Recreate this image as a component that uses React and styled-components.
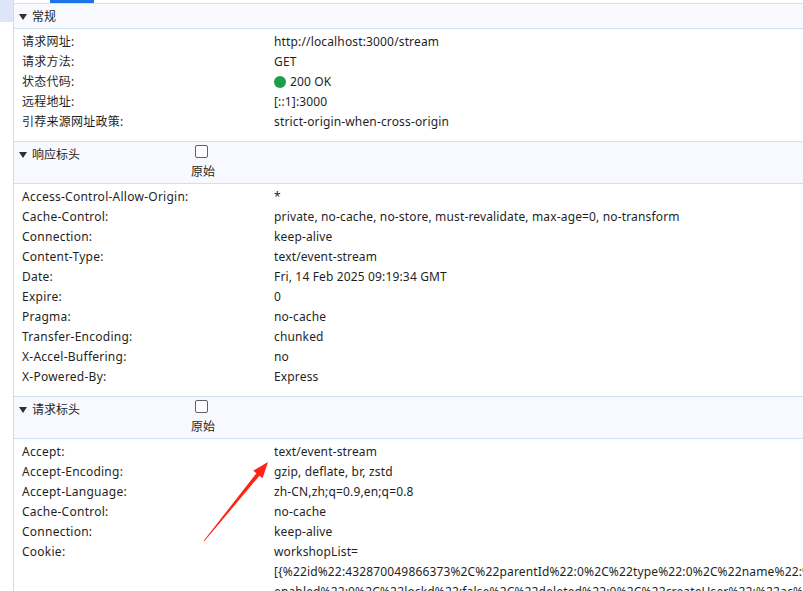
import React from "react";
import styled, { createGlobalStyle } from "styled-components";

const GlobalStyle = createGlobalStyle`
  html, body { margin: 0; padding: 0; background: #ffffff; }
  body {
    font-family: "Noto Sans", "Noto Sans CJK SC", sans-serif;
    font-size: 12px;
    color: #1f1f1f;
  }
`;

const Page = styled.div`
  display: flex;
  width: 803px;
  height: 591px;
  overflow: hidden;
  position: relative;
`;

const Rail = styled.div`
  width: 13px;
  flex: none;
  border-right: 1px solid #d3dbe7;
  display: flex;
  flex-direction: column;
`;

const RailSelected = styled.div`
  height: 22px;
  background: #dce6f8;
`;

const Main = styled.div`
  flex: 1;
  min-width: 0;
  display: flex;
  flex-direction: column;
  overflow: hidden;
`;

const TabStrip = styled.div`
  height: 4px;
  border-bottom: 1px solid #d6e2f3;
  display: flex;
  align-items: flex-start;
`;

const TabIndicator = styled.div`
  margin-left: 36px;
  width: 44px;
  height: 3px;
  background: #1a73e8;
`;

const Header = styled.div`
  display: flex;
  align-items: flex-start;
  padding: 3px 0 3px 4px;
  background: #f7f9fe;
  border-top: ${(p) => (p.$first ? "none" : "1px solid #cfdff6")};
  border-bottom: 1px solid #cfdff6;
`;

const TitleArea = styled.div`
  width: 173px;
  flex: none;
  display: flex;
  align-items: center;
  height: 18px;
  padding-top: 1px;
  box-sizing: border-box;
`;

const Triangle = styled.span`
  width: 0;
  height: 0;
  border-left: 4px solid transparent;
  border-right: 4px solid transparent;
  border-top: 6px solid #303030;
  margin: 0 5px 0 1px;
`;

const Title = styled.span`
  line-height: 17px;
  font-size: 12px;
  color: #1f1f1f;
`;

const RawToggle = styled.label`
  display: flex;
  flex-direction: column;
  align-items: center;
  width: 24px;
`;

const Check = styled.span`
  display: block;
  width: 11px;
  height: 11px;
  border: 1px solid #5f6368;
  border-radius: 2px;
  background: #fff;
  margin-left: -3px;
`;

const RawText = styled.span`
  margin-top: 5px;
  line-height: 17px;
`;

const Rows = styled.div`
  padding: 3px 0 9px;
`;

const Row = styled.div`
  display: flex;
  line-height: 20px;
  min-height: 20px;
`;

const Label = styled.div`
  width: 252px;
  flex: none;
  padding-left: 8px;
  white-space: nowrap;
  letter-spacing: 0.25px;
`;

const Value = styled.div`
  flex: 1;
  min-width: 0;
  white-space: nowrap;
  letter-spacing: 0.15px;
`;

const Dot = styled.span`
  display: inline-block;
  width: 12px;
  height: 12px;
  border-radius: 50%;
  background: #1e9e47;
  vertical-align: -2px;
  margin-right: 4px;
`;

const ArrowLayer = styled.svg`
  position: absolute;
  left: 190px;
  top: 450px;
  width: 90px;
  height: 100px;
  pointer-events: none;
`;

const general = [
  ["请求网址:", "http://localhost:3000/stream"],
  ["请求方法:", "GET"],
  ["状态代码:", "status"],
  ["远程地址:", "[::1]:3000"],
  ["引荐来源网址政策:", "strict-origin-when-cross-origin"],
];

const response = [
  ["Access-Control-Allow-Origin:", "*"],
  ["Cache-Control:", "private, no-cache, no-store, must-revalidate, max-age=0, no-transform"],
  ["Connection:", "keep-alive"],
  ["Content-Type:", "text/event-stream"],
  ["Date:", "Fri, 14 Feb 2025 09:19:34 GMT"],
  ["Expire:", "0"],
  ["Pragma:", "no-cache"],
  ["Transfer-Encoding:", "chunked"],
  ["X-Accel-Buffering:", "no"],
  ["X-Powered-By:", "Express"],
];

const request = [
  ["Accept:", "text/event-stream"],
  ["Accept-Encoding:", "gzip, deflate, br, zstd"],
  ["Accept-Language:", "zh-CN,zh;q=0.9,en;q=0.8"],
  ["Cache-Control:", "no-cache"],
  ["Connection:", "keep-alive"],
];

const cookieLines = [
  "workshopList=",
  "[{%22id%22:432870049866373%2C%22parentId%22:0%2C%22type%22:0%2C%22name%22:%22",
  "enabled%22:0%2C%22lockd%22:false%2C%22deleted%22:0%2C%22createUser%22:%22ac%22",
];

function SectionHeader({ title, raw, first }) {
  return (
    <Header $first={first}>
      <TitleArea>
        <Triangle />
        <Title>{title}</Title>
      </TitleArea>
      {raw && (
        <RawToggle>
          <Check />
          <RawText>原始</RawText>
        </RawToggle>
      )}
    </Header>
  );
}

function KV({ rows }) {
  return rows.map(([k, v]) => (
    <Row key={k}>
      <Label>{k}</Label>
      <Value>
        {v === "status" ? (
          <>
            <Dot />
            200 OK
          </>
        ) : (
          v
        )}
      </Value>
    </Row>
  ));
}

export default function App() {
  return (
    <>
      <GlobalStyle />
      <Page>
        <Rail>
          <RailSelected />
        </Rail>
        <Main>
          <TabStrip>
            <TabIndicator />
          </TabStrip>
          <SectionHeader title="常规" first />
          <Rows>
            <KV rows={general} />
          </Rows>
          <SectionHeader title="响应标头" raw />
          <Rows>
            <KV rows={response} />
          </Rows>
          <SectionHeader title="请求标头" raw />
          <Rows>
            <KV rows={request} />
            <Row>
              <Label>Cookie:</Label>
              <Value>
                {cookieLines.map((l) => (
                  <div key={l}>{l}</div>
                ))}
              </Value>
            </Row>
          </Rows>
        </Main>
        <ArrowLayer viewBox="0 0 90 100">
          <polygon
            points="78,12 72.6,28.2 69.5,25.7 14.3,91.3 13.7,90.7 66.4,23.2 63.3,20.7"
            fill="#ff2418"
          />
        </ArrowLayer>
      </Page>
    </>
  );
}
